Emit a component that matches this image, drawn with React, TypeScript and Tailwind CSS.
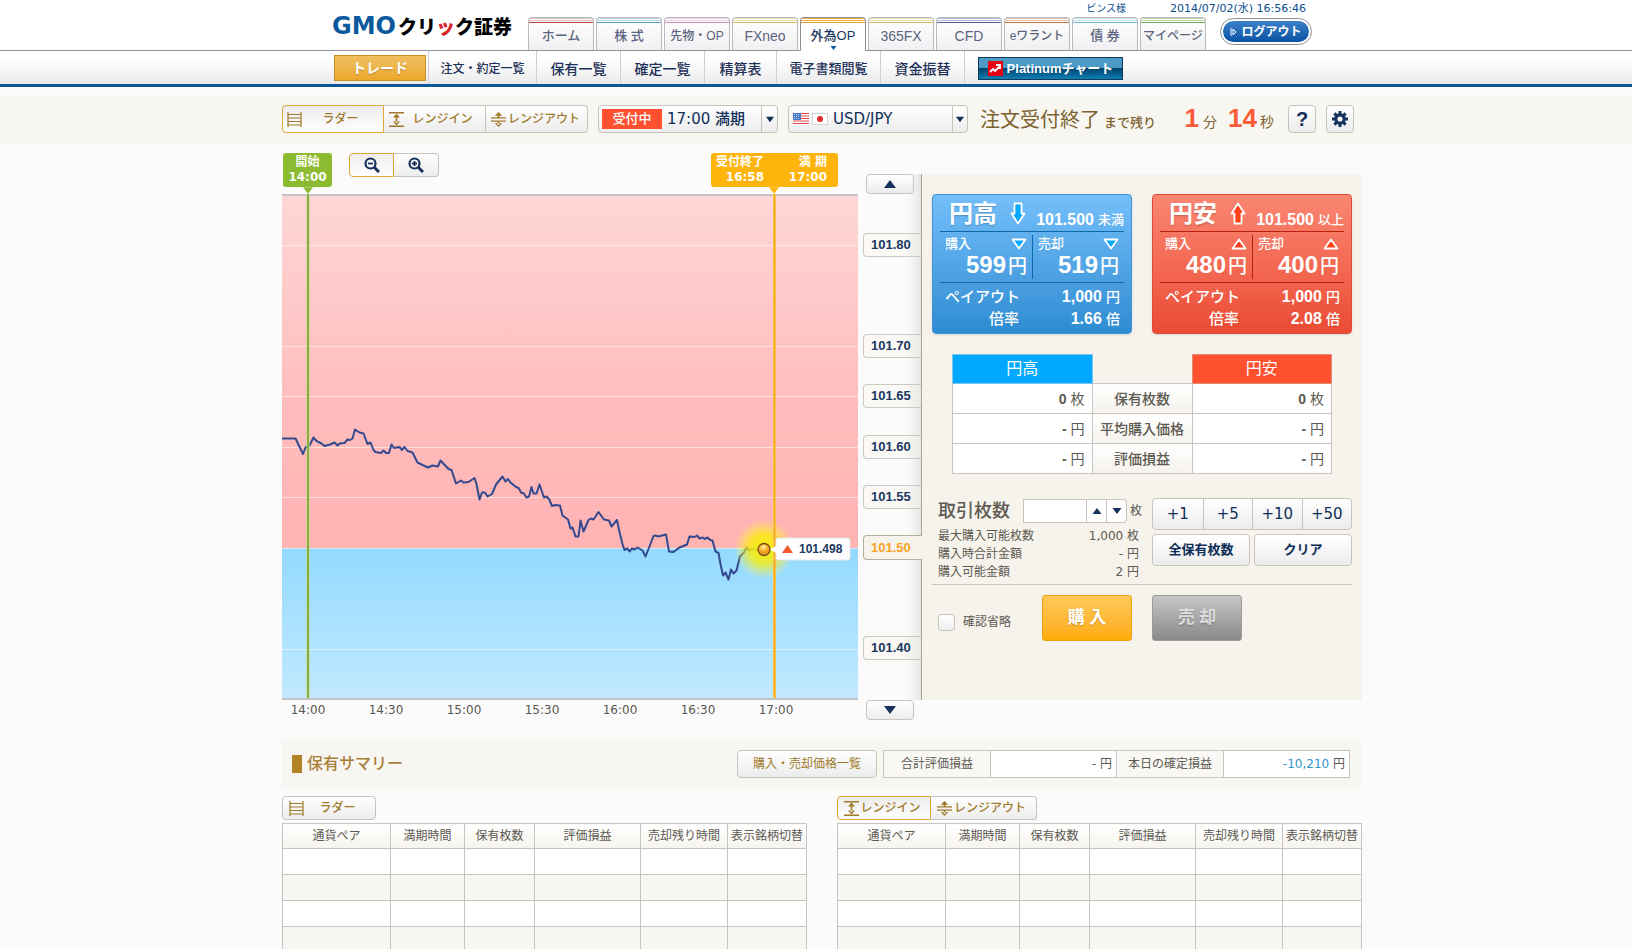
import { type ReactNode } from 'react'

const mainTabs = [
  { label: 'ホーム', stripe: 'bg-[#b5433c]', top: 'bg-[#e3bfbd]', size: 'text-[13px]' },
  { label: '株 式', stripe: 'bg-[#5b9bc8]', top: 'bg-[#b9d5e6]', size: 'text-[13px]' },
  { label: '先物・OP', stripe: 'bg-[#cf8fb0]', top: 'bg-[#e9cfdc]', size: 'text-[12px]' },
  { label: 'FXneo', stripe: 'bg-[#dcb955]', top: 'bg-[#eddfb2]', size: 'text-[14px]' },
  { label: '外為OP', stripe: 'bg-[#e5a029]', top: 'bg-[#e9ac44]', size: 'text-[13px]', active: true },
  { label: '365FX', stripe: 'bg-[#dcb955]', top: 'bg-[#eddfb2]', size: 'text-[14px]' },
  { label: 'CFD', stripe: 'bg-[#5a5f9e]', top: 'bg-[#b3b6d6]', size: 'text-[14px]' },
  { label: 'eワラント', stripe: 'bg-[#c7713f]', top: 'bg-[#e5c2ad]', size: 'text-[12px]' },
  { label: '債 券', stripe: 'bg-[#6fb5d2]', top: 'bg-[#c2e0eb]', size: 'text-[13px]' },
  { label: 'マイページ', stripe: 'bg-[#6fa850]', top: 'bg-[#b9d9a8]', size: 'text-[12px]' },
]

const subNav = [
  { label: '注文・約定一覧', width: 'w-[108px] text-[12px]' },
  { label: '保有一覧', width: 'w-[84px] text-[14px]' },
  { label: '確定一覧', width: 'w-[84px] text-[14px]' },
  { label: '精算表', width: 'w-[72px] text-[14px]' },
  { label: '電子書類閲覧', width: 'w-[104px] text-[13px]' },
  { label: '資金振替', width: 'w-[84px] text-[14px]' },
]

const priceTabs = [
  { price: '101.80', gap: 'mt-[39px]' },
  { price: '101.70', gap: 'mt-[77px]' },
  { price: '101.65', gap: 'mt-[26px]' },
  { price: '101.60', gap: 'mt-[27px]' },
  { price: '101.55', gap: 'mt-[26px]' },
  { price: '101.50', gap: 'mt-[26px]', active: true },
  { price: '101.40', gap: 'mt-[76px]' },
]

const times = ['14:00', '14:30', '15:00', '15:30', '16:00', '16:30', '17:00']

const gridLines = [51, 152, 202, 253, 303, 354, 455]

const rateLine =
  '0,244.5 13.5,244.5 21,260 23.5,253.5 27.5,251.5 31.5,243.5 34.5,247 39.5,249.5 42.5,252 48,250.5 52.5,248.5 55.5,251.5 57.5,249.5 62.5,249 65.5,245.5 68,246 70.5,244.5 73,235.5 77.5,238.5 81.5,239.5 85.5,250 88.5,248.5 91.5,256 93.5,258 99,259 101.5,256.5 104,259 107,259 109.5,250.5 112,254 117.5,253 120,256 122.5,253 125.5,257 130.5,258.5 135.5,268.5 140.5,271 146,273.5 150.5,271.5 156,272.5 158.5,266.5 166.5,275 169.5,276 174,289.5 179,286.5 181.5,288.5 186.5,288 192.5,284 194.5,290 197.5,305.5 200,298.5 203,298.5 205.5,302.5 210,300 214,290.5 220.5,282.5 223.5,287.5 226,285 228.5,288.5 234,293 236.5,294 239.5,299 241.5,299 244.5,303.5 247,302.5 249.5,293 251.5,299.5 254.5,299.5 257.5,290.5 262,303.5 264.5,302.5 267,305 270,312 273,311 278,311.5 280.5,321.5 286,325.5 288.5,334.5 290.5,333.5 293.5,342.5 296.5,342.5 298.5,326.5 301.5,337.5 306.5,326 309,324.5 311.5,325.5 316.5,318 322,325.5 327,326.5 329.5,332.5 335,326 337.5,338 340.5,350 342.5,356 345.5,354.5 347.5,357.5 350,354.5 352.5,355.5 355.5,353.5 360.5,356.5 363.5,362.5 368.5,350 371.5,342 373.5,341.5 376.5,342.5 384,340.5 387,357.5 391.5,358 397.5,353.5 402.5,351.5 405,350.5 407.5,342.5 412.5,343 415,341.5 417.5,344.5 420.5,343.5 422.5,345 425.5,343.5 428,346 430.5,346.5 433.5,357.5 436.5,359 438.5,370 441,381.5 443.5,378.5 446.5,385.5 449,375.5 451.5,379.5 454.5,376.5 458,362.5 462,358.5 464.5,353.5 467,356.5 471.5,354.5 474,356.5 482,355.5'

function Triangle({ down = false, className = 'w-3 h-2' }: { down?: boolean; className?: string }) {
  return (
    <svg className={className} viewBox="0 0 12 8" fill="currentColor" aria-hidden="true">
      <path d={down ? 'M0 0h12L6 8z' : 'M0 8h12L6 0z'} />
    </svg>
  )
}

function LadderIcon() {
  return (
    <svg className="w-[15px] h-[15px] shrink-0" viewBox="0 0 15 15" fill="none" stroke="currentColor">
      <path d="M1 0v15M14 0v15M1 2.5h13M1 6h13M1 9.5h13M1 13h13" strokeWidth="1.2" />
    </svg>
  )
}

function RangeInIcon() {
  return (
    <svg className="w-[15px] h-[15px] shrink-0" viewBox="0 0 15 15" fill="currentColor">
      <path d="M0 0h15v1.4H0zM0 13.6h15V15H0zM6.7 4h1.6v7H6.7zM7.5 1.5l3.5 4H4zM7.5 13.5l3.5-4H4z" />
    </svg>
  )
}

function RangeOutIcon() {
  return (
    <svg className="w-[15px] h-[15px] shrink-0" viewBox="0 0 15 15" fill="currentColor">
      <path d="M0 5.2h15v1.3H0zM0 8.5h15v1.3H0zM6.7 2h1.6v3.2H6.7zM6.7 9.8h1.6V13H6.7zM7.5 0l3.7 3.8H3.8zM7.5 15l3.7-3.8H3.8z" />
    </svg>
  )
}

function MagnifierIcon({ plus = false }: { plus?: boolean }) {
  return (
    <svg className="w-4 h-4" viewBox="0 0 16 16" fill="none" stroke="currentColor" aria-hidden="true">
      <circle cx="6.5" cy="6.5" r="5" strokeWidth="2.2" />
      <path d={plus ? 'M4 6.5h5M6.5 4v5' : 'M4 6.5h5'} strokeWidth="1.8" />
      <path d="M10 10l5 5" strokeWidth="3" />
    </svg>
  )
}

function GearIcon() {
  return (
    <svg className="w-4 h-4" viewBox="0 0 16 16">
      <circle cx="8" cy="8" r="4.2" fill="none" stroke="currentColor" strokeWidth="3.2" />
      <path d="M8 0v3M8 13v3M0 8h3M13 8h3M2.4 2.4l2 2M11.6 11.6l2 2M13.6 2.4l-2 2M4.4 11.6l-2 2" stroke="currentColor" strokeWidth="3" />
    </svg>
  )
}

function UsFlag() {
  return (
    <svg className="w-4 h-3 shrink-0" viewBox="0 0 16 12">
      <rect width="16" height="12" fill="#fff" />
      <path d="M0 .5h16M0 3h16M0 5.5h16M0 8h16M0 10.5h16" stroke="#e04848" strokeWidth="1.2" />
      <rect width="8" height="7" fill="#4378c8" />
      <path d="M1 1.5h6M1 3.5h6M1 5.5h6" stroke="#dfe9f8" strokeWidth=".8" strokeDasharray="1 1" />
    </svg>
  )
}

function JpFlag() {
  return (
    <svg className="w-4 h-3 shrink-0" viewBox="0 0 16 12">
      <rect x=".5" y=".5" width="15" height="11" fill="#fff" stroke="#d6d6d6" />
      <circle cx="8" cy="6" r="3" fill="#e02a2a" />
    </svg>
  )
}

function Header() {
  return (
    <header className="bg-white">
      <div className="border-b border-[#92929c] pl-3 h-[51px]">
        <div className="max-w-[980px] mx-auto flex h-[51px]">
          <a href="#" className="flex items-center mt-[14px] h-6 w-[196px] whitespace-nowrap">
            <span className="font-['DejaVu_Sans',sans-serif] font-bold text-[24px] text-[#0b5a9d]">GMO</span>
            <span className="ml-[2px] font-['Noto_Sans_CJK_JP',sans-serif] font-black text-[19px] text-black">
              クリ<span className="text-[#d8232a]">ッ</span>ク証券
            </span>
          </a>
          <nav className="flex gap-[2px] mt-[17px] h-[34px]">
            {mainTabs.map((tab) => (
              <a
                key={tab.label}
                href="#"
                className={`w-[66px] flex flex-col items-center overflow-hidden rounded-t border border-b-0 whitespace-nowrap ${
                  tab.active ? 'border-[#8f8f99] bg-white text-[#1b3560] h-[34px]' : 'border-[#b9b9be] bg-linear-to-b from-white to-[#f0f0f2] text-[#5a6480] h-[33px]'
                }`}
              >
                <span className={`w-full h-px shrink-0 ${tab.top}`} />
                <span className={`w-full h-px shrink-0 mt-px ${tab.top}`} />
                <span className={`w-full h-px shrink-0 mt-px ${tab.stripe}`} />
                <span className={`font-medium leading-5 mt-[3px] ${tab.size}`}>{tab.label}</span>
                {tab.active && <Triangle down className="w-[7px] h-1 shrink-0 text-[#0b5a9d]" />}
              </a>
            ))}
          </nav>
          <div className="relative ml-[14px] mt-[18px]">
            <p className="absolute right-[6px] -top-[17px] flex gap-11 whitespace-nowrap text-[11px] leading-4 text-[#0b4f8f] font-['DejaVu_Sans','Noto_Sans_CJK_JP',sans-serif]">
              <span className="text-[10px]">ビンス様</span>
              <span>2014/07/02(水) 16:56:46</span>
            </p>
            <button className="w-[92px] h-[27px] rounded-full border border-[#8e8e98] bg-white p-[2px]">
              <span className="flex items-center justify-center gap-1 h-full rounded-full bg-linear-to-b from-[#3a80c8] to-[#0553a3] text-white text-[12px] font-bold leading-none whitespace-nowrap">
                <svg className="w-[7px] h-2" viewBox="0 0 7 8" fill="none" stroke="currentColor">
                  <path d="M1 0v8M3 1l3 3-3 3z" />
                </svg>
                ログアウト
              </span>
            </button>
          </div>
        </div>
      </div>
      <div className="border-b-3 border-[#0d5796] pl-3 bg-linear-to-b from-white from-20% to-[#ebebeb]">
        <nav className="max-w-[980px] mx-auto flex h-[33px] font-medium text-[#1d3058] whitespace-nowrap">
          <div className="border-r border-[#cfcfcf] px-[2px] w-[97px] shrink-0">
            <a href="#" className="mt-[4px] flex h-[26px] items-center justify-center border border-[#c58d2a] bg-linear-to-b from-[#f0bf60] to-[#eba92b] text-[14px] text-white font-bold text-shadow-sm">
              トレード
            </a>
          </div>
          {subNav.map((item) => (
            <a key={item.label} href="#" className={`flex items-center justify-center border-r border-[#cfcfcf] pt-[3px] ${item.width}`}>
              {item.label}
            </a>
          ))}
          <a
            href="#"
            className="ml-[13px] mt-[6px] flex h-[23px] w-[145px] items-center justify-center gap-1 border border-[#0d3a5c] bg-linear-to-b from-[#4b9bc4] from-45% via-[#02426f] via-50% to-[#1180b4] text-white text-[13px] font-bold font-['Liberation_Sans','Noto_Sans_CJK_JP',sans-serif]"
          >
            <svg className="w-[15px] h-[15px]" viewBox="0 0 15 15">
              <rect width="15" height="15" fill="#e60012" />
              <path d="M2 11l3-3 2 2 4-4M8 4h4v4" fill="none" stroke="#fff" strokeWidth="1.8" />
            </svg>
            <span>Platinumチャート</span>
          </a>
        </nav>
      </div>
    </header>
  )
}

function ModeTab({ icon, label, active, className }: { icon: ReactNode; label: string; active?: boolean; className: string }) {
  return (
    <button
      className={`flex items-center border text-[#a07a2a] font-medium whitespace-nowrap ${className} ${
        active ? 'border-[#dfa738] bg-linear-to-b from-[#ececec] to-white' : 'border-[#c9c4ba] bg-linear-to-b from-white to-[#ececec]'
      }`}
    >
      {icon}
      <span className="flex-1 text-center">{label}</span>
    </button>
  )
}

function Toolbar() {
  return (
    <div className="mt-2 bg-[#f8f6f0] pl-3">
      <div className="max-w-[1080px] mx-auto flex h-12 items-center whitespace-nowrap">
        <div className="flex text-[12px]">
          <ModeTab active icon={<LadderIcon />} label="ラダー" className="w-[102px] h-7 pl-1 pr-1 rounded-l" />
          <ModeTab icon={<RangeInIcon />} label="レンジイン" className="w-[102px] h-7 pl-[5px] pr-1 border-l-0" />
          <ModeTab icon={<RangeOutIcon />} label="レンジアウト" className="w-[102px] h-7 px-[5px] border-l-0 rounded-r" />
        </div>
        <div className="ml-[10px] flex h-7 w-[180px] items-center rounded border border-[#c9c4ba] bg-linear-to-b from-white to-[#ececec] text-[#0f2f58]">
          <span className="ml-[3px] mr-[5px] flex h-5 w-[60px] items-center justify-center bg-[#ff5130] text-[13px] font-medium text-white">受付中</span>
          <select aria-label="満期" className="h-full w-[94px] appearance-none bg-transparent text-[15px] font-medium font-['DejaVu_Sans','Noto_Sans_CJK_JP',sans-serif]">
            <option>17:00 満期</option>
          </select>
          <span className="flex h-full flex-1 items-center justify-center border-l border-[#c9c4ba]">
            <Triangle down className="w-2 h-[7px]" />
          </span>
        </div>
        <div className="ml-[10px] flex h-7 w-[180px] items-center gap-[3px] rounded border border-[#c9c4ba] bg-linear-to-b from-white to-[#ececec] pl-1 text-[#0f2f58]">
          <UsFlag />
          <JpFlag />
          <select aria-label="通貨ペア" className="h-full flex-1 appearance-none bg-transparent pl-[2px] text-[15px] font-['DejaVu_Sans',sans-serif]">
            <option>USD/JPY</option>
          </select>
          <span className="flex h-full w-[15px] items-center justify-center border-l border-[#c9c4ba]">
            <Triangle down className="w-2 h-[7px]" />
          </span>
        </div>
        <p className="ml-3 flex w-[308px] items-baseline pt-[2px] text-[#7c6231] leading-7">
          <span className="text-[20px]">注文受付終了</span>
          <span className="ml-[4px] text-[13px] font-medium">まで残り</span>
          <span className="ml-auto text-[26px] font-bold text-[#fa5a37] font-['Liberation_Sans',sans-serif]">1</span>
          <span className="ml-1 text-[14px]">分</span>
          <span className="ml-[11px] text-[26px] font-bold text-[#fa5a37] font-['Liberation_Sans',sans-serif]">14</span>
          <span className="ml-[3px] mr-[14px] text-[14px]">秒</span>
        </p>
        <button aria-label="ヘルプ" className="h-7 w-7 rounded border border-[#c9c4ba] bg-linear-to-b from-white to-[#ececec] text-[20px] leading-none font-bold text-[#16315c] font-['Liberation_Sans',sans-serif]">
          ?
        </button>
        <button aria-label="設定" className="ml-[10px] flex h-7 w-7 items-center justify-center rounded border border-[#c9c4ba] bg-linear-to-b from-white to-[#ececec] text-[#16315c]">
          <GearIcon />
        </button>
      </div>
    </div>
  )
}

function Chart() {
  return (
    <div className="min-w-0 flex-1">
      <div className="flex h-[41px] items-start text-white text-[12px] font-bold leading-[15px] font-['DejaVu_Sans','Noto_Sans_CJK_JP',sans-serif]">
        <div className="relative ml-px flex h-[34px] w-[49px] flex-col items-center justify-center rounded-[3px] bg-[#8cbb31]">
          <span>開始</span>
          <span>14:00</span>
          <Triangle down className="absolute top-[34px] left-5 w-[10px] h-[7px] text-[#8cbb31]" />
        </div>
        <div className="ml-[17px] flex text-[#16315c]">
          <button aria-label="縮小" className="flex h-6 w-[45px] items-center justify-center rounded-l border border-[#dfa738] bg-linear-to-b from-[#ececec] to-white">
            <MagnifierIcon />
          </button>
          <button aria-label="拡大" className="flex h-6 w-[45px] items-center justify-center rounded-r border border-l-0 border-[#c9c4ba] bg-linear-to-b from-white to-[#ececec]">
            <MagnifierIcon plus />
          </button>
        </div>
        <div className="relative ml-auto mr-5 flex h-[34px] w-[127px] items-center justify-between rounded-[3px] bg-[#ffb40c] px-[5px] text-right">
          <div>
            <p>受付終了</p>
            <p>16:58</p>
          </div>
          <div className="pr-[6px]">
            <p>満 期</p>
            <p>17:00</p>
          </div>
          <Triangle down className="absolute top-[34px] left-[58px] w-[10px] h-[7px] text-[#ffb40c]" />
        </div>
      </div>
      <svg className="block h-[506px] w-full" viewBox="0 0 576 506" preserveAspectRatio="none">
        <defs>
          <linearGradient id="high" x1="0" y1="0" x2="0" y2="1">
            <stop offset="0" stopColor="#ffd6d6" />
            <stop offset="0.6" stopColor="#ffbcbc" />
            <stop offset="1" stopColor="#ffb3b3" />
          </linearGradient>
          <linearGradient id="low" x1="0" y1="0" x2="0" y2="1">
            <stop offset="0" stopColor="#93daff" />
            <stop offset="1" stopColor="#c2e9ff" />
          </linearGradient>
          <radialGradient id="glow">
            <stop offset="0" stopColor="#f8f000" />
            <stop offset="0.5" stopColor="#f9ee10" stopOpacity="0.8" />
            <stop offset="1" stopColor="#fff34a" stopOpacity="0" />
          </radialGradient>
          <radialGradient id="dot" cx="0.45" cy="0.3">
            <stop offset="0" stopColor="#fff2b0" />
            <stop offset="0.5" stopColor="#fcc33a" />
            <stop offset="1" stopColor="#e6991c" />
          </radialGradient>
        </defs>
        <rect width="576" height="354" fill="url(#high)" />
        <rect y="354" width="576" height="152" fill="url(#low)" />
        {gridLines.map((y) => (
          <path key={y} d={`M0 ${y + 0.5}H576`} stroke="#fff" strokeOpacity="0.55" />
        ))}
        <path d="M0 1h576M0 505h576" stroke="#c6c3c6" strokeWidth="2" />
        <polyline points={rateLine} fill="none" stroke="#334a8e" strokeWidth="2" strokeLinejoin="round" />
        <path d="M26 0v504" stroke="#c8dc8a" strokeWidth="4" strokeOpacity="0.6" />
        <path d="M26 0v504" stroke="#7fa83a" strokeWidth="2" strokeOpacity="0.9" />
        <circle cx="482" cy="355" r="30" fill="url(#glow)" />
        <path d="M492.5 0v504" stroke="#ffd070" strokeWidth="3" />
        <path d="M492.5 0v504" stroke="#f7ac1e" strokeWidth="2" />
        <rect x="494" y="344" width="74" height="22" rx="2" fill="#fff" stroke="#dfe3e8" />
        <path d="M488 355.5l7-4v8z" fill="#fff" />
        <path d="M500 359h11l-5.5-8z" fill="#f1592a" />
        <circle cx="482" cy="355.5" r="6" fill="url(#dot)" stroke="#7a4c1c" strokeWidth="1.3" />
        <text x="517" y="359" fontFamily="Liberation Sans" fontWeight="bold" fontSize="12" fill="#1b3763">
          101.498
        </text>
      </svg>
      <div className="-ml-[13px] flex justify-start text-[12px] leading-5 text-[#5a564e] font-['DejaVu_Sans',sans-serif]">
        {times.map((time) => (
          <span key={time} className="w-[78px] text-center">
            {time}
          </span>
        ))}
      </div>
    </div>
  )
}

function PriceLadder() {
  return (
    <div className="mt-[21px] w-16 shrink-0">
      <div className="flex h-[526px] flex-col border-r border-[#a8a590] bg-linear-to-l from-[#e6e6e6] to-[#fbfbfb] to-[14px]">
        <button aria-label="上へ" className="ml-2 flex h-5 w-12 shrink-0 items-center justify-center rounded border border-[#c9c4ba] bg-linear-to-b from-white to-[#ececec] text-[#16315c]">
          <Triangle />
        </button>
        {priceTabs.map(({ price, gap, active }) => (
          <div
            key={price}
            className={`ml-[5px] flex shrink-0 items-center rounded-l border border-r-0 pl-[7px] text-[13px] font-bold font-['Liberation_Sans',sans-serif] ${gap} ${
              active ? 'h-[25px] -mr-px border-[#b5b09c] bg-[#f6f3ec] text-[#f9a427]' : 'h-6 border-[#ccc9c0] bg-linear-to-r from-[#faf9f5] from-70% to-[#e9e8e4] text-[#1b3763]'
            }`}
          >
            {price}
          </div>
        ))}
      </div>
      <button aria-label="下へ" className="ml-2 flex h-5 w-12 items-center justify-center rounded border border-[#c9c4ba] bg-linear-to-b from-white to-[#ececec] text-[#16315c]">
        <Triangle down />
      </button>
    </div>
  )
}

type RateCardProps = {
  kind: 'high' | 'low'
  title: string
  condition: string
  buy: string
  sell: string
  ratio: string
}

const cardStyles = {
  high: {
    box: 'border-[#4396d6] from-[#74bffa] to-[#2d8cd2]',
    rule: 'border-[#0e69a8]',
    fill: '#00a9ff',
  },
  low: {
    box: 'border-[#dd4d36] from-[#fb8672] to-[#ea4a33]',
    rule: 'border-[#b5200f]',
    fill: '#ff4019',
  },
}

function RateCard({ kind, title, condition, buy, sell, ratio }: RateCardProps) {
  const style = cardStyles[kind]
  const isHigh = kind === 'high'
  return (
    <section
      className={`h-[140px] w-[200px] rounded border bg-linear-to-b px-[7px] text-white shadow-sm whitespace-nowrap font-['Liberation_Sans','Noto_Sans_CJK_JP',sans-serif] ${style.box}`}
    >
      <div className={`flex h-[37px] items-center border-b pl-[9px] ${style.rule}`}>
        <h2 className="pt-[2px] text-[24px] font-bold leading-9 text-shadow-sm">{title}</h2>
        <svg className="ml-[13px] w-4 h-[23px]" viewBox="0 0 16 23" fill={style.fill} stroke="#fff" strokeWidth="1.8" strokeLinejoin="round">
          <path d={isHigh ? 'M4.5 1.5h7v10h3L8 21.5 1.5 11.5h3z' : 'M4.5 21.5h7v-10h3L8 1.5 1.5 11.5h3z'} />
        </svg>
        <span className="ml-auto self-end text-[16px] font-bold leading-[22px]">101.500</span>
        <span className="ml-1 self-end text-[13px] font-medium leading-[22px]">{condition}</span>
      </div>
      <div className={`flex border-b py-[3px] ${style.rule}`}>
        {[
          { label: '購入', value: buy, cell: `w-[93px] border-r px-[5px] ${style.rule}` },
          { label: '売却', value: sell, cell: 'flex-1 px-[5px]' },
        ].map((item) => (
          <div key={item.label} className={item.cell}>
            <div className="flex h-[18px] items-center justify-between">
              <span className="text-[13px] font-medium leading-[18px]">{item.label}</span>
              <svg className="w-4 h-3" viewBox="0 0 16 12" fill={style.fill} stroke="#fff" strokeWidth="1.8" strokeLinejoin="round">
                <path d={isHigh ? 'M1.5 1.5h13L8 10.5z' : 'M1.5 10.5h13L8 1.5z'} />
              </svg>
            </div>
            <p className="flex items-baseline justify-end gap-[2px] leading-[24px]">
              <span className="text-[24px] font-bold">{item.value}</span>
              <span className="text-[19px] font-medium">円</span>
            </p>
          </div>
        ))}
      </div>
      <dl className="grid grid-cols-[74px_1fr] gap-x-2 pt-[3px] pr-[4px] pl-[5px] text-[15px] font-medium leading-[22px]">
        <dt>ペイアウト</dt>
        <dd className="text-right">
          <b className="text-[16px]">1,000</b> <span className="text-[14px]">円</span>
        </dd>
        <dt className="text-right">倍率</dt>
        <dd className="text-right">
          <b className="text-[16px]">{ratio}</b> <span className="text-[14px]">倍</span>
        </dd>
      </dl>
    </section>
  )
}

const positions = [
  { label: '保有枚数', value: '0', unit: '枚' },
  { label: '平均購入価格', value: '-', unit: '円' },
  { label: '評価損益', value: '-', unit: '円' },
]

function PositionTable() {
  return (
    <table className="mx-auto mt-5 w-[380px] table-fixed border-collapse text-[14px] leading-5 text-[#5d5a52] font-['Liberation_Sans','Noto_Sans_CJK_JP',sans-serif]">
      <thead>
        <tr className="h-[29px] text-[16px] text-white">
          <th className="border border-[#7cc6ee] bg-[#00a8ff] font-normal">円高</th>
          <th className="w-[100px]" aria-label="項目" />
          <th className="border border-[#e58a76] bg-[#ff5130] font-normal">円安</th>
        </tr>
      </thead>
      <tbody>
        {positions.map((row) => (
          <tr key={row.label} className="h-[30px]">
            <td className="border border-[#c9c4c0] bg-white pr-[7px] text-right">
              <b>{row.value}</b> {row.unit}
            </td>
            <th scope="row" className="border border-[#c9c4c0] bg-linear-to-b from-white to-[#f5f2ec] font-medium">
              {row.label}
            </th>
            <td className="border border-[#c9c4c0] bg-white pr-[7px] text-right">
              <b>{row.value}</b> {row.unit}
            </td>
          </tr>
        ))}
      </tbody>
    </table>
  )
}

function OrderForm() {
  return (
    <form className="mt-[24px]">
      <div className="flex justify-between border-b border-[#c9c4ba] pb-[3px]">
        <div className="w-[208px] pl-[6px] text-[12px] leading-[18px] text-[#5d5a52] font-['DejaVu_Sans','Noto_Sans_CJK_JP',sans-serif]">
          <div className="flex h-[29px] items-start">
            <label htmlFor="quantity" className="w-[85px] shrink-0 text-[18px] leading-[26px] font-medium text-[#5d5a52]">
              取引枚数
            </label>
            <input id="quantity" type="text" className="mt-px h-6 w-16 shrink-0 border border-[#c9c4ba] bg-white px-1" />
            <button type="button" aria-label="増やす" className="mt-px flex h-6 w-5 shrink-0 items-center justify-center border border-l-0 border-[#c9c4ba] bg-white text-[#16315c]">
              <Triangle className="w-[10px] h-[6px]" />
            </button>
            <button type="button" aria-label="減らす" className="mt-px flex h-6 w-5 shrink-0 items-center justify-center rounded-r border border-l-0 border-[#c9c4ba] bg-white text-[#16315c]">
              <Triangle down className="w-[10px] h-[6px]" />
            </button>
            <span className="ml-[3px] leading-[26px]">枚</span>
          </div>
          <dl className="grid grid-cols-[1fr_auto] pr-px">
            <dt>最大購入可能枚数</dt>
            <dd className="text-right">1,000 枚</dd>
            <dt>購入時合計金額</dt>
            <dd className="text-right">- 円</dd>
            <dt>購入可能金額</dt>
            <dd className="text-right">2 円</dd>
          </dl>
        </div>
        <div className="w-[200px] text-[#0f2f58] font-['DejaVu_Sans','Noto_Sans_CJK_JP',sans-serif]">
          <div className="grid h-8 grid-cols-4 rounded border border-[#c9c4ba] bg-linear-to-b from-white to-[#ececec] text-[15px]">
            <button type="button">+1</button>
            <button type="button" className="border-l border-[#c9c4ba]">+5</button>
            <button type="button" className="border-l border-[#c9c4ba]">+10</button>
            <button type="button" className="border-l border-[#c9c4ba]">+50</button>
          </div>
          <div className="mt-1 grid grid-cols-2 gap-1 text-[13px] font-bold">
            <button type="button" className="h-8 rounded border border-[#c9c4ba] bg-linear-to-b from-white to-[#ececec]">全保有枚数</button>
            <button type="button" className="h-8 rounded border border-[#c9c4ba] bg-linear-to-b from-white to-[#ececec]">クリア</button>
          </div>
        </div>
      </div>
      <div className="mt-[10px] flex items-start">
        <label className="mt-[18px] flex w-[110px] items-center gap-2 pl-[6px] text-[12px] leading-[18px] text-[#5d5a52]">
          <input type="checkbox" className="h-[17px] w-[17px] appearance-none rounded-[3px] border border-[#c9c4ba] bg-linear-to-b from-white to-[#eeeeee]" />
          確認省略
        </label>
        <button type="button" className="h-[46px] w-[90px] rounded-[3px] border border-[#e9a310] bg-linear-to-b from-[#ffc956] to-[#ffab00] text-[17px] font-bold text-white text-shadow-sm">
          購 入
        </button>
        <button type="button" className="ml-5 h-[46px] w-[90px] rounded-[3px] border border-[#9b9b9b] bg-linear-to-b from-[#c6c6c6] to-[#8a8a8a] text-[17px] font-bold text-[#dcdcdc] text-shadow-sm">
          売 却
        </button>
      </div>
    </form>
  )
}

const columns = [
  { label: '通貨ペア', width: 'w-[108px]' },
  { label: '満期時間', width: 'w-[74px]' },
  { label: '保有枚数', width: 'w-[70px]' },
  { label: '評価損益', width: 'w-[106px]' },
  { label: '売却残り時間', width: 'w-[87px]' },
  { label: '表示銘柄切替', width: '' },
]

function HoldingsTable() {
  return (
    <table className="mt-[3px] w-full table-fixed border-collapse bg-white text-[12px] leading-4 text-[#5d5a52]">
      <thead>
        <tr className="h-[25px]">
          {columns.map((column) => (
            <th key={column.label} className={`border border-[#c9c4c4] bg-linear-to-b from-white to-[#f6f4ef] font-normal whitespace-nowrap ${column.width}`}>
              {column.label}
            </th>
          ))}
        </tr>
      </thead>
      <tbody>
        {[0, 1, 2, 3].map((row) => (
          <tr key={row} className="h-[26px] even:bg-[#f8f6f1]">
            {columns.map((column) => (
              <td key={column.label} className="border border-[#c9c4c4]" />
            ))}
          </tr>
        ))}
      </tbody>
    </table>
  )
}

function Summary() {
  return (
    <section className="mt-5 whitespace-nowrap">
      <div className="flex h-12 items-center bg-[#f8f6f1] pl-[10px] pr-3">
        <span className="h-[18px] w-[10px] bg-[#b08427]" />
        <h2 className="ml-[5px] text-[16px] font-medium text-[#a8803a]">保有サマリー</h2>
        <button className="ml-auto h-7 w-[140px] rounded border border-[#c9c4ba] bg-linear-to-b from-white to-[#ececec] text-[12px] text-[#a07a2a]">
          購入・売却価格一覧
        </button>
        <table className="ml-[6px] w-[467px] table-fixed border-collapse text-[12px] leading-4 text-[#5d5a52] font-['DejaVu_Sans','Noto_Sans_CJK_JP',sans-serif]">
          <tbody>
            <tr className="h-[27px]">
              <th scope="row" className="w-[107px] border border-[#c9c4c0] bg-[#f9f8f5] font-normal">合計評価損益</th>
              <td className="w-[126px] border border-[#c9c4c0] bg-white pr-1 text-right">- 円</td>
              <th scope="row" className="w-[107px] border border-[#c9c4c0] bg-[#f9f8f5] font-normal">本日の確定損益</th>
              <td className="border border-[#c9c4c0] bg-white pr-1 text-right">
                <span className="text-[#2f95cc]">-10,210</span> 円
              </td>
            </tr>
          </tbody>
        </table>
      </div>
      <div className="mt-2 flex gap-[30px] text-[12px]">
        <div className="min-w-0 flex-1">
          <div className="flex">
            <ModeTab icon={<LadderIcon />} label="ラダー" className="w-[94px] h-6 pl-[6px] pr-1 rounded" />
          </div>
          <HoldingsTable />
        </div>
        <div className="min-w-0 flex-1">
          <div className="flex">
            <ModeTab active icon={<RangeInIcon />} label="レンジイン" className="w-[94px] h-6 pl-[6px] pr-2 rounded-l" />
            <ModeTab icon={<RangeOutIcon />} label="レンジアウト" className="w-[106px] h-6 pl-[6px] pr-2 border-l-0 rounded-r" />
          </div>
          <HoldingsTable />
        </div>
      </div>
    </section>
  )
}

export default function App() {
  return (
    <div className="min-h-screen bg-[#fbfbfb] font-['Liberation_Sans','Noto_Sans_CJK_JP',sans-serif]">
      <Header />
      <Toolbar />
      <main className="pl-3">
        <div className="mx-auto max-w-[1080px]">
          <div className="mt-[10px] flex items-start">
            <Chart />
            <PriceLadder />
            <div className="mt-[21px] h-[526px] w-[440px] shrink-0 bg-[#f6f3ec] px-[10px] pt-5">
              <div className="flex justify-between">
                <RateCard kind="high" title="円高" condition="未満" buy="599" sell="519" ratio="1.66" />
                <RateCard kind="low" title="円安" condition="以上" buy="480" sell="400" ratio="2.08" />
              </div>
              <PositionTable />
              <OrderForm />
            </div>
          </div>
          <Summary />
        </div>
      </main>
    </div>
  )
}
